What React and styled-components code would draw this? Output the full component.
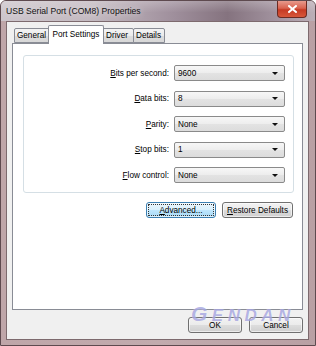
import React from 'react'
import styled, { createGlobalStyle } from 'styled-components'

const Global = createGlobalStyle`
  html, body {
    margin: 0;
    padding: 0;
    background: #ffffff;
  }
  body {
    font-family: "Liberation Sans", Arial, sans-serif;
  }
`

const rows = [
  { key: 'B', rest: 'its per second:', value: '9600' },
  { key: 'D', rest: 'ata bits:', value: '8' },
  { key: 'P', rest: 'arity:', value: 'None' },
  { key: 'S', rest: 'top bits:', value: '1' },
  { key: 'F', rest: 'low control:', value: 'None' },
]

const tabs = [
  { label: 'General', w: 36 },
  { label: 'Port Settings', w: 56, active: true },
  { label: 'Driver', w: 33 },
  { label: 'Details', w: 32 },
]

const App = () => {
  return (
    <>
      <Global />
      <Window>
        <TitleBar>
          <Title>USB Serial Port (COM8) Properties</Title>
          <CloseButton>
            <svg width="9" height="8" viewBox="0 0 9 8">
              <path d="M1 1 L8 7 M8 1 L1 7" stroke="#ffffff" strokeWidth="2" strokeLinecap="square" />
            </svg>
          </CloseButton>
        </TitleBar>
        <Client>
          <TabStrip>
            {tabs.map((t) => (
              <Tab key={t.label} $w={t.w} $active={t.active}>{t.label}</Tab>
            ))}
          </TabStrip>
          <Panel>
            <Group>
              {rows.map((r) => (
                <React.Fragment key={r.key}>
                  <Label><u>{r.key}</u>{r.rest}</Label>
                  <Combo>
                    <span>{r.value}</span>
                    <Arrow />
                  </Combo>
                </React.Fragment>
              ))}
            </Group>
            <PanelButtons>
              <Button $w={70} $focused><FocusRing><u>A</u>dvanced...</FocusRing></Button>
              <Button $w={71}><u>R</u>estore Defaults</Button>
            </PanelButtons>
          </Panel>
          <Footer>
            <Button $w={54}>OK</Button>
            <Button $w={54}>Cancel</Button>
          </Footer>
        </Client>
        <Watermark>G<small>ENDAN</small></Watermark>
      </Window>
    </>
  )
}

export default App

const Window = styled.div`
position: relative;
width: 316px;
height: 346px;
box-sizing: border-box;
display: flex;
flex-direction: column;
border: 1px solid #5e4a4f;
border-radius: 6px 6px 0 0;
background: linear-gradient(to right, #bfa6a9 0%, #c2abae 50%, #b9a0a4 100%);
overflow: hidden;
`

const TitleBar = styled.div`
height: 21px;
display: flex;
align-items: flex-start;
justify-content: space-between;
padding: 0 9px 0 6px;
margin: -1px -1px 0;
background:
  linear-gradient(to bottom, rgba(255,255,255,0.25), rgba(255,255,255,0) 60%),
  linear-gradient(to right, #cdc6cc 0%, #c3b9c0 30%, #9f8f9c 55%, #85737f 72%, #a394a0 88%, #bdb0b8 100%);
`

const Title = styled.div`
font-size: 8.6px;
color: #111;
line-height: 1;
padding-top: 7px;
text-shadow: 0 0 6px rgba(255,255,255,0.8);
`

const CloseButton = styled.div`
width: 30px;
height: 17px;
margin-top: 1px;
box-sizing: border-box;
display: flex;
align-items: center;
justify-content: center;
border: 1px solid #6b2a22;
border-top: none;
border-radius: 0 0 4px 4px;
background: linear-gradient(to bottom, #e89a8c 0%, #d9624f 45%, #c63a23 55%, #d8573a 100%);
`

const Client = styled.div`
flex: 1;
display: flex;
flex-direction: column;
margin: 0 6px 5px 5px;
padding: 2px 5px 0 5px;
background: #f0f0f0;
border: 1px solid #7d6a6e;
`

const TabStrip = styled.div`
height: 19px;
display: flex;
align-items: flex-end;
padding-left: 2px;
`

const Tab = styled.div`
position: relative;
width: ${(p) => p.$w}px;
height: ${(p) => (p.$active ? 19 : 15)}px;
box-sizing: border-box;
display: flex;
align-items: center;
justify-content: center;
font-size: 8.2px;
color: #000;
border: 1px solid #898c95;
border-bottom: ${(p) => (p.$active ? 'none' : '1px solid #898c95')};
border-radius: 2px 2px 0 0;
margin: ${(p) => (p.$active ? '0 -2px -1px' : '0')};
margin-left: ${(p) => (p.$active ? '-2px' : '-1px')};
z-index: ${(p) => (p.$active ? 2 : 1)};
padding-bottom: ${(p) => (p.$active ? '2px' : '0')};
padding-right: ${(p) => (p.$active ? '0' : '1px')};
background: ${(p) => (p.$active ? '#ffffff' : 'linear-gradient(to bottom, #f3f3f3 0%, #ebebeb 50%, #dcdcdc 51%, #d8d8d8 100%)')};
&:first-child { margin-left: 0; }
`

const Panel = styled.div`
flex: 1;
display: flex;
flex-direction: column;
background: #ffffff;
border: 1px solid #898c95;
padding: 11px 8px 0 10px;
`

const Group = styled.div`
display: grid;
grid-template-columns: 145px 111px;
column-gap: 5px;
row-gap: 9.5px;
align-items: center;
padding: 9px 10px 9px 0;
border: 1px solid #d5dfe5;
border-radius: 3px;
`

const Label = styled.div`
text-align: right;
font-size: 8.2px;
color: #000;
`

const Combo = styled.div`
height: 16px;
box-sizing: border-box;
display: flex;
align-items: center;
justify-content: space-between;
padding: 0 6px 0 3px;
font-size: 8.2px;
color: #000;
border: 1px solid #8a8a8a;
border-radius: 2px;
background: linear-gradient(to bottom, #f7f7f7 0%, #ededed 50%, #e3e3e3 51%, #dcdcdc 100%);
`

const Arrow = styled.span`
width: 0;
height: 0;
border-left: 3px solid transparent;
border-right: 3px solid transparent;
border-top: 3px solid #111;
`

const PanelButtons = styled.div`
display: flex;
justify-content: flex-end;
gap: 6px;
margin-top: 9px;
padding-right: 1px;
`

const Button = styled.div`
width: ${(p) => p.$w}px;
height: 16px;
box-sizing: border-box;
display: flex;
align-items: center;
justify-content: center;
padding: 1px;
font-size: 8.2px;
color: #000;
border: 1px solid ${(p) => (p.$focused ? '#3c7fb1' : '#707070')};
border-radius: 3px;
background: ${(p) => (p.$focused
    ? 'linear-gradient(to bottom, #eaf6fd 0%, #d9f0fc 50%, #bee6fd 51%, #a7d9f5 100%)'
    : 'linear-gradient(to bottom, #f2f2f2 0%, #ebebeb 50%, #dddddd 51%, #cfcfcf 100%)')};
box-shadow: inset 0 0 0 1px rgba(255,255,255,0.6);
`

const FocusRing = styled.span`
flex: 1;
align-self: stretch;
display: flex;
align-items: center;
justify-content: center;
border: 1px dotted #333;
`

const Footer = styled.div`
height: 28px;
display: flex;
align-items: center;
justify-content: flex-end;
gap: 7px;
padding-top: 1px;
`

const Watermark = styled.div`
position: absolute;
left: 190px;
top: 301px;
font-family: "Liberation Sans", Arial, sans-serif;
font-weight: 700;
font-style: italic;
font-size: 21px;
letter-spacing: 4.5px;
color: rgba(110, 110, 205, 0.5);
text-shadow: 0 0 1px rgba(255,255,255,0.7);
pointer-events: none;
small {
  font-size: 17px;
}
`
